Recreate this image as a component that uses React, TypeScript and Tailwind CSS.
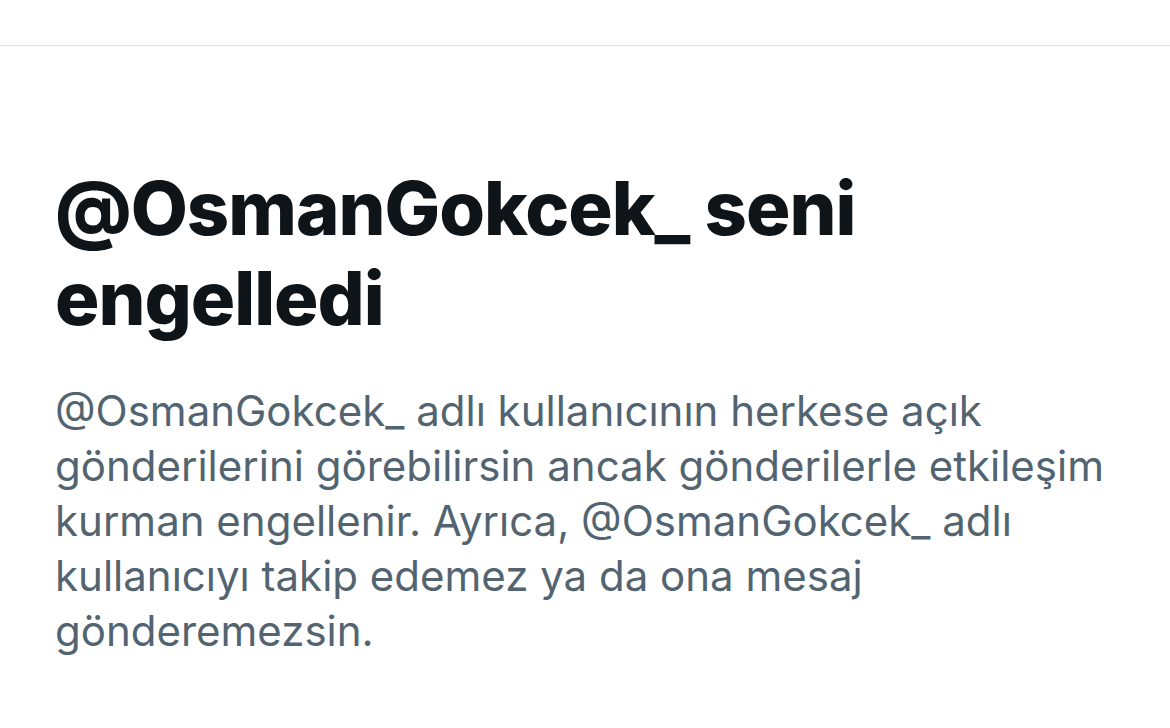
import React from 'react';

export default function App() {
  return (
    <div className="w-[1170px] h-[728px] bg-white overflow-hidden" style={{ fontFamily: 'Inter, "Noto Sans", sans-serif' }}>
      <div className="h-[46px] border-b border-[#dedede]" />
      <div className="pl-[55px] pr-[40px] pt-[117px]">
        <h1 className="text-[74px] leading-[90px] font-extrabold text-[#0f1419] tracking-[-1px]">
          @OsmanGokcek_ seni
          <br />
          engelledi
        </h1>
        <p className="mt-[40px] text-[42px] leading-[55px] text-[#536471]">
          @OsmanGokcek_ adlı kullanıcının herkese açık
          <br />
          gönderilerini görebilirsin ancak gönderilerle etkileşim
          <br />
          kurman engellenir. Ayrıca, @OsmanGokcek_ adlı
          <br />
          kullanıcıyı takip edemez ya da ona mesaj
          <br />
          gönderemezsin.
        </p>
      </div>
    </div>
  );
}
